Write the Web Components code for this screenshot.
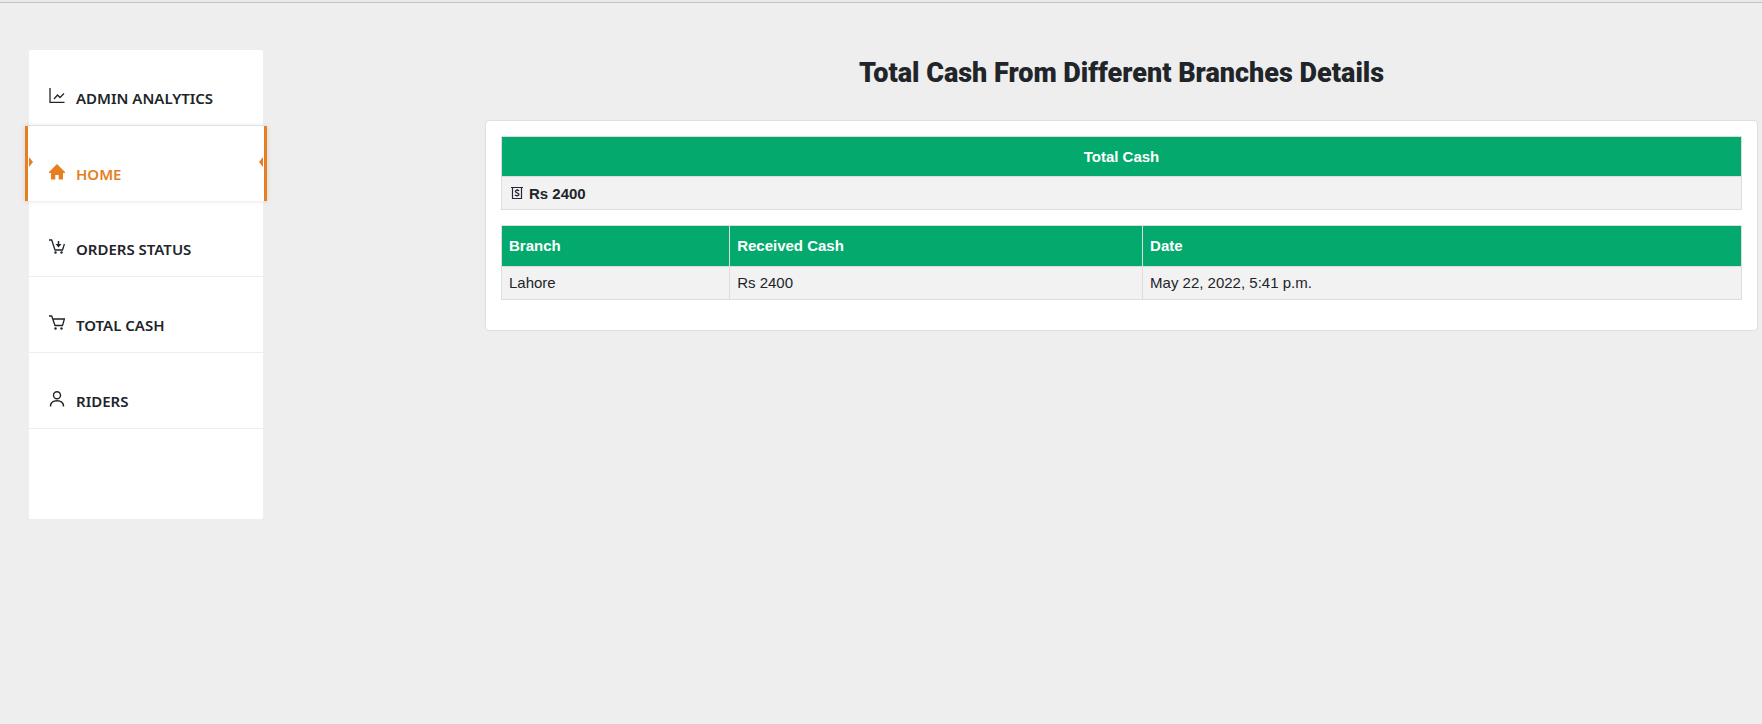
<!DOCTYPE html>
<html lang="en">
<head>
<meta charset="utf-8">
<title>Total Cash</title>
<style>
  body { margin: 0; background: #eee; color: #212529; font: 15px/16px "Liberation Sans", Arial, sans-serif; }
</style>
</head>
<body>
<cash-dashboard></cash-dashboard>

<script>
const icons = {
  graph: '<path fill="none" stroke="currentColor" stroke-width="1.300" d="M1 0v14.400h14.500M5 11l3.500-4 2.500 2.500L15 5.500"/>',
  home: '<path d="M8 0 0 8v1h2v6.500h4.300V11h3.400v4.500H14V9h2V8Z"/>',
  orders: '<path fill="none" stroke="currentColor" stroke-width="1.300" d="M0 1h2.700l3.300 10h7.500L15.400 5"/><path fill="none" stroke="currentColor" stroke-width="1.500" d="M9.500 2V6"/><path d="M6.500 5h6L9.500 8.500Z"/><circle cx="6.500" cy="13.500" r="1.200"/><circle cx="12.500" cy="13.500" r="1.200"/>',
  cart: '<path fill="none" stroke="currentColor" stroke-width="1.300" d="M0 1h2.700l3.300 9.500h7.500L15.400 4H3.700"/><circle cx="6.500" cy="13.500" r="1.200"/><circle cx="12.500" cy="13.500" r="1.200"/>',
  person: '<g fill="none" stroke="currentColor" stroke-width="1.400"><circle cx="8" cy="4.200" r="3.500"/><path d="M1.500 15.500C1.500 11.500 4 9.700 8 9.700s6.500 1.800 6.500 5.800"/></g>'
};

class SideItem extends HTMLElement {
  connectedCallback() {
    this.attachShadow({ mode: 'open' }).innerHTML = `
      <style>
        :host { display: block; }
        a { display: flex; align-items: center; gap: 11px; box-sizing: border-box; height: 76px;
            padding: 20px 20px 0; border-bottom: 1px solid #eee; color: #212529; text-decoration: none;
            font: 600 15px/20px "Noto Sans", "Segoe UI", sans-serif; text-transform: uppercase; }
        svg { width: 16px; height: 16px; margin-bottom: 4px; fill: currentColor; }
        :host([active]) a { position: relative; height: 75px; margin: 0 -4px; border-left: 3px solid #e67e22;
            border-right: 3px solid #e67e22; border-bottom: 0; padding-left: 21px; color: #e67e22; background: #fff;
            box-shadow: 0 0 5px rgba(0,0,0,.12); }
        :host([active]) a::before, :host([active]) a::after { content: ""; position: absolute; top: 31px;
            border: 5px solid transparent; }
        :host([active]) a::before { left: 1px; border-left: 4px solid #e67e22; border-right: 0; }
        :host([active]) a::after { right: 1px; border-right: 4px solid #e67e22; border-left: 0; }
      </style>
      <a href="#"><svg viewBox="0 0 16 16" aria-hidden="true">${icons[this.getAttribute('icon')]}</svg><span><slot></slot></span></a>`;
  }
}
customElements.define('side-item', SideItem);

class SideMenu extends HTMLElement {
  connectedCallback() {
    this.attachShadow({ mode: 'open' }).innerHTML = `
      <style>
        :host { display: block; }
        nav { background: #fff; border-radius: 2px; padding-bottom: 90px; }
      </style>
      <nav><slot></slot></nav>`;
  }
}
customElements.define('side-menu', SideMenu);

const tableStyle = `
  :host { display: block; }
  table { width: 100%; border-collapse: collapse; table-layout: fixed; }
  th, td { border: 1px solid #ddd; padding: 8px 7px; text-align: left; }
  th { padding: 12px 7px; background: #04aa6d; color: #fff; }
  td { background: #f2f2f2; }`;

class CashTotal extends HTMLElement {
  connectedCallback() {
    this.attachShadow({ mode: 'open' }).innerHTML = `
      <style>${tableStyle}
        th { text-align: center; padding-bottom: 11px; }
        td { padding: 9px 8px 7px; font-weight: 700; }
        svg { width: 14px; height: 14px; margin-right: 5px; vertical-align: -1px; }
      </style>
      <table>
        <thead><tr><th>Total Cash</th></tr></thead>
        <tbody><tr><td><svg viewBox="0 0 14 14" aria-hidden="true" fill="none" stroke="#2b2338"><path d="M1 1.500h12M2.500 1.500v11h9v-11" stroke-width="1.200"/><path stroke-width="1.300" d="M9 5C8.500 4 5.300 3.900 5.300 5.500S9 6.500 9 8.300 5.500 10 5 8.700"/><path d="M7.100 3v1.500M7.100 9v1.500"/></svg><slot></slot></td></tr></tbody>
      </table>`;
  }
}
customElements.define('cash-total', CashTotal);

class BranchTable extends HTMLElement {
  connectedCallback() {
    this.attachShadow({ mode: 'open' }).innerHTML = `
      <style>${tableStyle}
        .branch { width: 18.4%; }
        .cash { width: 33.3%; }
      </style>
      <table>
        <colgroup><col class="branch"><col class="cash"><col></colgroup>
        <thead><tr><th>Branch</th><th>Received Cash</th><th>Date</th></tr></thead>
        <tbody><tr><td>Lahore</td><td>Rs 2400</td><td>May 22, 2022, 5:41 p.m.</td></tr></tbody>
      </table>`;
  }
}
customElements.define('branch-table', BranchTable);

class CashDashboard extends HTMLElement {
  connectedCallback() {
    this.attachShadow({ mode: 'open' }).innerHTML = `
      <style>
        :host { display: block; }
        header { height: 2px; background: #e9e9e9; border-bottom: 1px solid #c4c4c4; }
        .layout { display: grid; grid-template-columns: 234px 1fr; column-gap: 222px; align-items: start;
                  padding: 47px 4px 0 29px; }
        h1 { margin: 0 0 27px; padding-top: 3px; text-align: center; font: 900 27px/40px Impact, Roboto, sans-serif; }
        section { display: grid; gap: 15px; padding: 15px 15px 30px; background: #fff;
                  border: 1px solid #dfdfdf; border-radius: 4px; }
      </style>
      <header></header>
      <div class="layout">
        <side-menu>
          <side-item icon="graph">Admin Analytics</side-item>
          <side-item icon="home" active>Home</side-item>
          <side-item icon="orders">Orders Status</side-item>
          <side-item icon="cart">Total Cash</side-item>
          <side-item icon="person">Riders</side-item>
        </side-menu>
        <main>
          <h1>Total Cash From Different Branches Details</h1>
          <section>
            <cash-total>Rs 2400</cash-total>
            <branch-table></branch-table>
          </section>
        </main>
      </div>`;
  }
}
customElements.define('cash-dashboard', CashDashboard);
</script>
</body>
</html>
